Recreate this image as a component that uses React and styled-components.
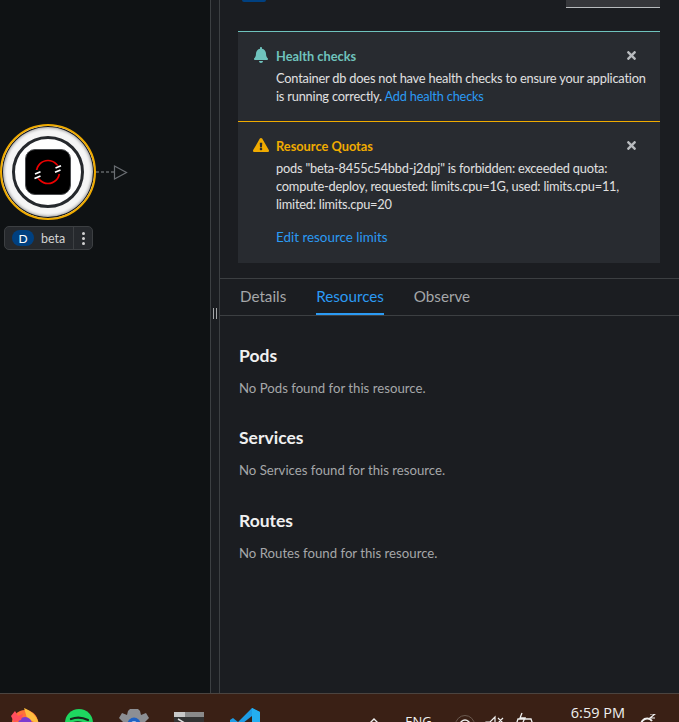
import React from "react";
import styled, { createGlobalStyle } from "styled-components";
import { FaBell, FaExclamationTriangle, FaTimes } from "react-icons/fa";

const GlobalStyle = createGlobalStyle`
  html, body {
    margin: 0;
    padding: 0;
    background: #1b1d21;
  }
  * {
    box-sizing: border-box;
  }
`;

const Screen = styled.div`
  width: 679px;
  height: 722px;
  overflow: hidden;
  display: flex;
  flex-direction: column;
  font-family: Lato, "Noto Sans", "Liberation Sans", sans-serif;
  color: #e0e0e0;
`;

const Main = styled.div`
  flex: 1;
  min-height: 0;
  display: flex;
`;

const Canvas = styled.div`
  position: relative;
  width: 210px;
  background: #0f1214;
  flex-shrink: 0;
`;

const Splitter = styled.div`
  width: 10px;
  flex-shrink: 0;
  background: #1b1d21;
  border-left: 1px solid #3c3f42;
  border-right: 1px solid #3c3f42;
  display: flex;
  align-items: center;
  justify-content: center;
  gap: 2px;
  padding-bottom: 67px;
  i {
    display: block;
    width: 1px;
    height: 11px;
    background: #a5a7a9;
  }
`;

const Node = styled.div`
  position: absolute;
  left: 0;
  top: 124px;
  width: 96px;
  height: 96px;
  border-radius: 50%;
  background: #f5f5f5;
  border: 2px solid #f0ab00;
  box-shadow: inset 0 0 0 1px #15171a, inset 0 0 3px 2px #9a9a9a;
  display: flex;
  align-items: center;
  justify-content: center;
`;

const InnerRing = styled.div`
  width: 72px;
  height: 72px;
  border-radius: 50%;
  border: 3px solid #26292d;
  background: #fff;
  display: flex;
  align-items: center;
  justify-content: center;
`;

const LogoTile = styled.div`
  width: 46px;
  height: 46px;
  border-radius: 10px;
  background: #000;
  border: 1px solid #4a4c4f;
  display: flex;
  align-items: center;
  justify-content: center;
`;

const Connector = styled.svg`
  position: absolute;
  left: 96px;
  top: 162px;
`;

const NodeLabel = styled.div`
  position: absolute;
  left: 4px;
  top: 226px;
  width: 89px;
  height: 24px;
  background: #26292d;
  border: 1px solid #3c3f42;
  border-radius: 5px;
  display: flex;
  align-items: center;
  font-size: 12.5px;
`;

const LabelMain = styled.div`
  flex: 1;
  display: flex;
  align-items: center;
  gap: 7px;
  padding-left: 7px;
  color: #d2d2d2;
  height: 100%;
`;

const Badge = styled.span`
  width: 22px;
  height: 16px;
  border-radius: 8px;
  background: #004080;
  color: #fff;
  font-size: 12px;
  display: flex;
  align-items: center;
  justify-content: center;
`;

const Kebab = styled.div`
  width: 19px;
  height: 100%;
  border-left: 1px solid #3c3f42;
  display: flex;
  flex-direction: column;
  align-items: center;
  justify-content: center;
  gap: 2px;
  i {
    width: 3px;
    height: 3px;
    border-radius: 50%;
    background: #d2d2d2;
  }
`;

const Panel = styled.div`
  flex: 1;
  min-width: 0;
  background: #1b1d21;
  display: flex;
  flex-direction: column;
`;

const PanelTop = styled.div`
  height: 31px;
  display: flex;
  justify-content: space-between;
  align-items: flex-start;
  padding: 0 19px;
`;

const TopBadge = styled.div`
  width: 24px;
  height: 2px;
  margin-left: 3px;
  background: #004080;
  border-radius: 0 0 8px 8px;
`;

const TopButton = styled.div`
  width: 94px;
  height: 8px;
  background: #36373b;
  border-bottom: 1px solid #b8bbbe;
`;

const Alerts = styled.div`
  padding: 0 19px 15px 18px;
  border-bottom: 1px solid #3c3f42;
`;

const Alert = styled.div`
  position: relative;
  background: #282b30;
  border-top: 1px solid ${(p) => p.$accent};
  padding: 16px 0 0 38px;
  height: ${(p) => p.$height}px;
`;

const AlertIcon = styled.span`
  position: absolute;
  left: 15px;
  top: 15px;
  color: ${(p) => p.$accent};
  font-size: 16px;
  line-height: 16px;
  display: flex;
`;

const Close = styled.span`
  position: absolute;
  right: 22px;
  top: 17px;
  color: #b8bbbe;
  font-size: 13px;
  line-height: 13px;
  display: flex;
`;

const AlertTitle = styled.div`
  color: ${(p) => p.$accent};
  font-size: 12.8px;
  font-weight: 700;
  line-height: 16px;
`;

const AlertBody = styled.div`
  margin-top: 5px;
  font-size: 12.8px;
  letter-spacing: -0.2px;
  line-height: 18px;
  color: #e0e0e0;
  white-space: nowrap;
`;

const Link = styled.a`
  color: #2b9af3;
`;

const ActionLink = styled.a`
  display: block;
  margin-top: 15px;
  color: #2b9af3;
  font-size: 13.4px;
  line-height: 18px;
`;

const Tabs = styled.div`
  height: 37px;
  display: flex;
  gap: 30px;
  padding-left: 20px;
  border-bottom: 1px solid #3c3f42;
`;

const Tab = styled.div`
  height: 36px;
  padding-top: 7px;
  font-size: 15.2px;
  line-height: 20px;
  color: ${(p) => (p.$active ? "#2b9af3" : "#a5a7a9")};
  border-bottom: 2px solid ${(p) => (p.$active ? "#2b9af3" : "transparent")};
`;

const Sections = styled.div`
  padding: 29.6px 19px 0;
  display: flex;
  flex-direction: column;
  gap: 31.5px;
`;

const Section = styled.section`
  h2 {
    margin: 0;
    font-size: 17.5px;
    line-height: 20px;
    font-weight: 700;
    color: #f0f0f0;
  }
  p {
    margin: 13px 0 0;
    font-size: 13.2px;
    line-height: 18px;
    color: #a5a7a9;
  }
`;

const Taskbar = styled.div`
  height: 29px;
  flex-shrink: 0;
  background: #3a2015;
  border-top: 1px solid #4b4440;
  overflow: hidden;
  display: flex;
  justify-content: space-between;
  padding: 14px 22px 0 11px;
`;

const AppIcons = styled.div`
  display: flex;
  gap: 26px;
  align-items: flex-start;
`;

const AppSlot = styled.div`
  margin-top: ${(p) => p.$mt || 0}px;
  margin-left: ${(p) => p.$ml || 0}px;
`;

const Tray = styled.div`
  display: flex;
  align-items: flex-start;
  color: #f0f0f0;
  font-family: "Open Sans", "Noto Sans", sans-serif;
`;

const TrayIcon = styled.svg`
  display: block;
  flex-shrink: 0;
  margin-left: ${(p) => p.$ml || 0}px;
  margin-top: ${(p) => p.$mt || 0}px;
`;

const Lang = styled.span`
  font-size: 13px;
  line-height: 16px;
  margin: 5px 0 0 25px;
`;

const Clock = styled.span`
  font-size: 14.5px;
  line-height: 18px;
  margin: -4px 0 0 36px;
  white-space: nowrap;
`;

const accents = {
  health: "#6fc3bd",
  warning: "#f0ab00",
};

function OpenShiftLogo() {
  return (
    <svg width="30" height="30" viewBox="0 0 30 30" fill="none">
      <circle cx="15" cy="15" r="11.5" stroke="#e00" strokeWidth="1.7" />
      <path d="M19 7 L29 10 L29 17 L22 17 Z" fill="#000" />
      <path d="M11 23 L1 20 L1 13 L8 13 Z" fill="#000" />
      <path d="M2 17 L7.5 14.8 M1.5 21.5 L7.5 19 M22.5 11 L28 8.8 M22 15.2 L27.5 13" stroke="#fff" strokeWidth="1.7" />
    </svg>
  );
}

function Firefox() {
  return (
    <svg width="28" height="28" viewBox="0 0 28 28">
      <circle cx="14" cy="15" r="13" fill="#ff7139" />
      <path d="M13 0 C20 3 27 8 28 17 L16 10 Z" fill="#ffbd3f" />
      <circle cx="14" cy="16" r="7" fill="#7a3bd0" />
      <path d="M0 8 L4 3 L7 8 L12 6 L10 12 L3 14 Z" fill="#ff4f5e" />
    </svg>
  );
}

function Spotify() {
  return (
    <svg width="28" height="28" viewBox="0 0 28 28" fill="none">
      <circle cx="14" cy="14" r="14" fill="#1ed760" />
      <path d="M6 10 C11 8 18 8.5 23 11 M7 14.5 C11 13 17 13.5 21.5 15.5 M8 19 C12 17.5 16 18 20 20" stroke="#17251b" strokeWidth="2.2" strokeLinecap="round" />
    </svg>
  );
}

function Gear() {
  return (
    <svg width="30" height="30" viewBox="0 0 30 30">
      <path
        d="M9 2 L11 0 H19 L21 2 L22 6 L27 4 L30 9 L26 13 V19 L30 23 L27 28 L20 26 H10 L3 28 L0 23 L4 19 V13 L0 9 L3 4 L8 6 Z"
        fill="#8c8f94"
      />
      <circle cx="15" cy="15" r="6.5" fill="#1f62c4" />
      <circle cx="15" cy="15" r="3" fill="#9fc3ee" />
    </svg>
  );
}

function Terminal() {
  return (
    <svg width="30" height="30" viewBox="0 0 30 30">
      <rect width="30" height="30" fill="#333" />
      <rect width="30" height="5" fill="#8a8a8a" />
      <rect width="11" height="5" fill="#c8c8c8" />
      <path d="M4 7 L9 10 L4 13" fill="none" stroke="#ddd" strokeWidth="1.5" />
    </svg>
  );
}

function VsCode() {
  return (
    <svg width="30" height="30" viewBox="0 0 30 30">
      <path d="M22 0 L30 4 V26 L22 30 L8 16 L3 20 L0 18 V12 L3 10 L8 14 Z" fill="#1d9ce5" />
      <path d="M22 8 L13 15 L22 22 Z" fill="#3a2015" />
      <path d="M22 0 L30 4 V26 L22 30 Z" fill="#24aef0" />
    </svg>
  );
}

function App() {
  return (
    <Screen>
      <GlobalStyle />
      <Main>
        <Canvas>
          <Node>
            <InnerRing>
              <LogoTile>
                <OpenShiftLogo />
              </LogoTile>
            </InnerRing>
          </Node>
          <Connector width="34" height="20" viewBox="0 0 34 20" fill="none">
            <path d="M0 10 H18" stroke="#8a8d90" strokeWidth="1" strokeDasharray="3 2" />
            <path d="M18.5 4 L30.5 10.5 L18.5 17 Z" stroke="#6a6e73" strokeWidth="1.2" />
          </Connector>
          <NodeLabel>
            <LabelMain>
              <Badge>D</Badge>
              beta
            </LabelMain>
            <Kebab>
              <i />
              <i />
              <i />
            </Kebab>
          </NodeLabel>
        </Canvas>
        <Splitter>
          <i />
          <i />
        </Splitter>
        <Panel>
          <PanelTop>
            <TopBadge />
            <TopButton />
          </PanelTop>
          <Alerts>
            <Alert $accent={accents.health} $height={90}>
              <AlertIcon $accent={accents.health}>
                <FaBell />
              </AlertIcon>
              <Close>
                <FaTimes />
              </Close>
              <AlertTitle $accent={accents.health}>Health checks</AlertTitle>
              <AlertBody>
                Container db does not have health checks to ensure your application
                <br />
                is running correctly. <Link>Add health checks</Link>
              </AlertBody>
            </Alert>
            <Alert $accent={accents.warning} $height={142}>
              <AlertIcon $accent={accents.warning}>
                <FaExclamationTriangle />
              </AlertIcon>
              <Close>
                <FaTimes />
              </Close>
              <AlertTitle $accent={accents.warning}>Resource Quotas</AlertTitle>
              <AlertBody>
                pods "beta-8455c54bbd-j2dpj" is forbidden: exceeded quota:
                <br />
                compute-deploy, requested: limits.cpu=1G, used: limits.cpu=11,
                <br />
                limited: limits.cpu=20
              </AlertBody>
              <ActionLink>Edit resource limits</ActionLink>
            </Alert>
          </Alerts>
          <Tabs>
            <Tab>Details</Tab>
            <Tab $active>Resources</Tab>
            <Tab>Observe</Tab>
          </Tabs>
          <Sections>
            <Section>
              <h2>Pods</h2>
              <p>No Pods found for this resource.</p>
            </Section>
            <Section>
              <h2>Services</h2>
              <p>No Services found for this resource.</p>
            </Section>
            <Section>
              <h2>Routes</h2>
              <p>No Routes found for this resource.</p>
            </Section>
          </Sections>
        </Panel>
      </Main>
      <Taskbar>
        <AppIcons>
          <Firefox />
          <AppSlot $mt={1}>
            <Spotify />
          </AppSlot>
          <AppSlot $mt={1}>
            <Gear />
          </AppSlot>
          <AppSlot $mt={4} $ml={-1}>
            <Terminal />
          </AppSlot>
          <VsCode />
        </AppIcons>
        <Tray>
          <TrayIcon $mt={10} width="12" height="8" viewBox="0 0 12 8" fill="none">
            <path d="M1 6 L6 1 L11 6" stroke="#f0f0f0" strokeWidth="1.4" />
          </TrayIcon>
          <Lang>ENG</Lang>
          <TrayIcon $ml={23} $mt={7} width="20" height="20" viewBox="0 0 20 20" fill="none">
            <circle cx="10" cy="10" r="9.5" stroke="#6b5a50" />
            <circle cx="10" cy="10" r="5" stroke="#f0f0f0" strokeWidth="1.4" />
          </TrayIcon>
          <TrayIcon $ml={10} $mt={7} width="20" height="20" viewBox="0 0 20 20" fill="none">
            <path d="M1 7 H5 L10 2 V18 L5 13 H1 Z M13 3 L18 8 M18 3 L13 8" stroke="#f0f0f0" strokeWidth="1.2" />
          </TrayIcon>
          <TrayIcon $ml={10} $mt={4} width="20" height="20" viewBox="0 0 20 20" fill="none">
            <path d="M3 7 H16 L18 13 V19 H1 V13 Z M7 1 L5 6 H10 L8 10" stroke="#f0f0f0" strokeWidth="1.3" />
          </TrayIcon>
          <Clock>6:59 PM</Clock>
          <TrayIcon $ml={12} $mt={6} width="20" height="20" viewBox="0 0 20 20" fill="none">
            <path d="M15 7 A6 6 0 1 0 16 12 L16 18 H3" stroke="#f0f0f0" strokeWidth="2" />
            <path d="M13 0 H18 L13 4 H18" stroke="#f0f0f0" strokeWidth="1.2" />
          </TrayIcon>
        </Tray>
      </Taskbar>
    </Screen>
  );
}

export default App;
